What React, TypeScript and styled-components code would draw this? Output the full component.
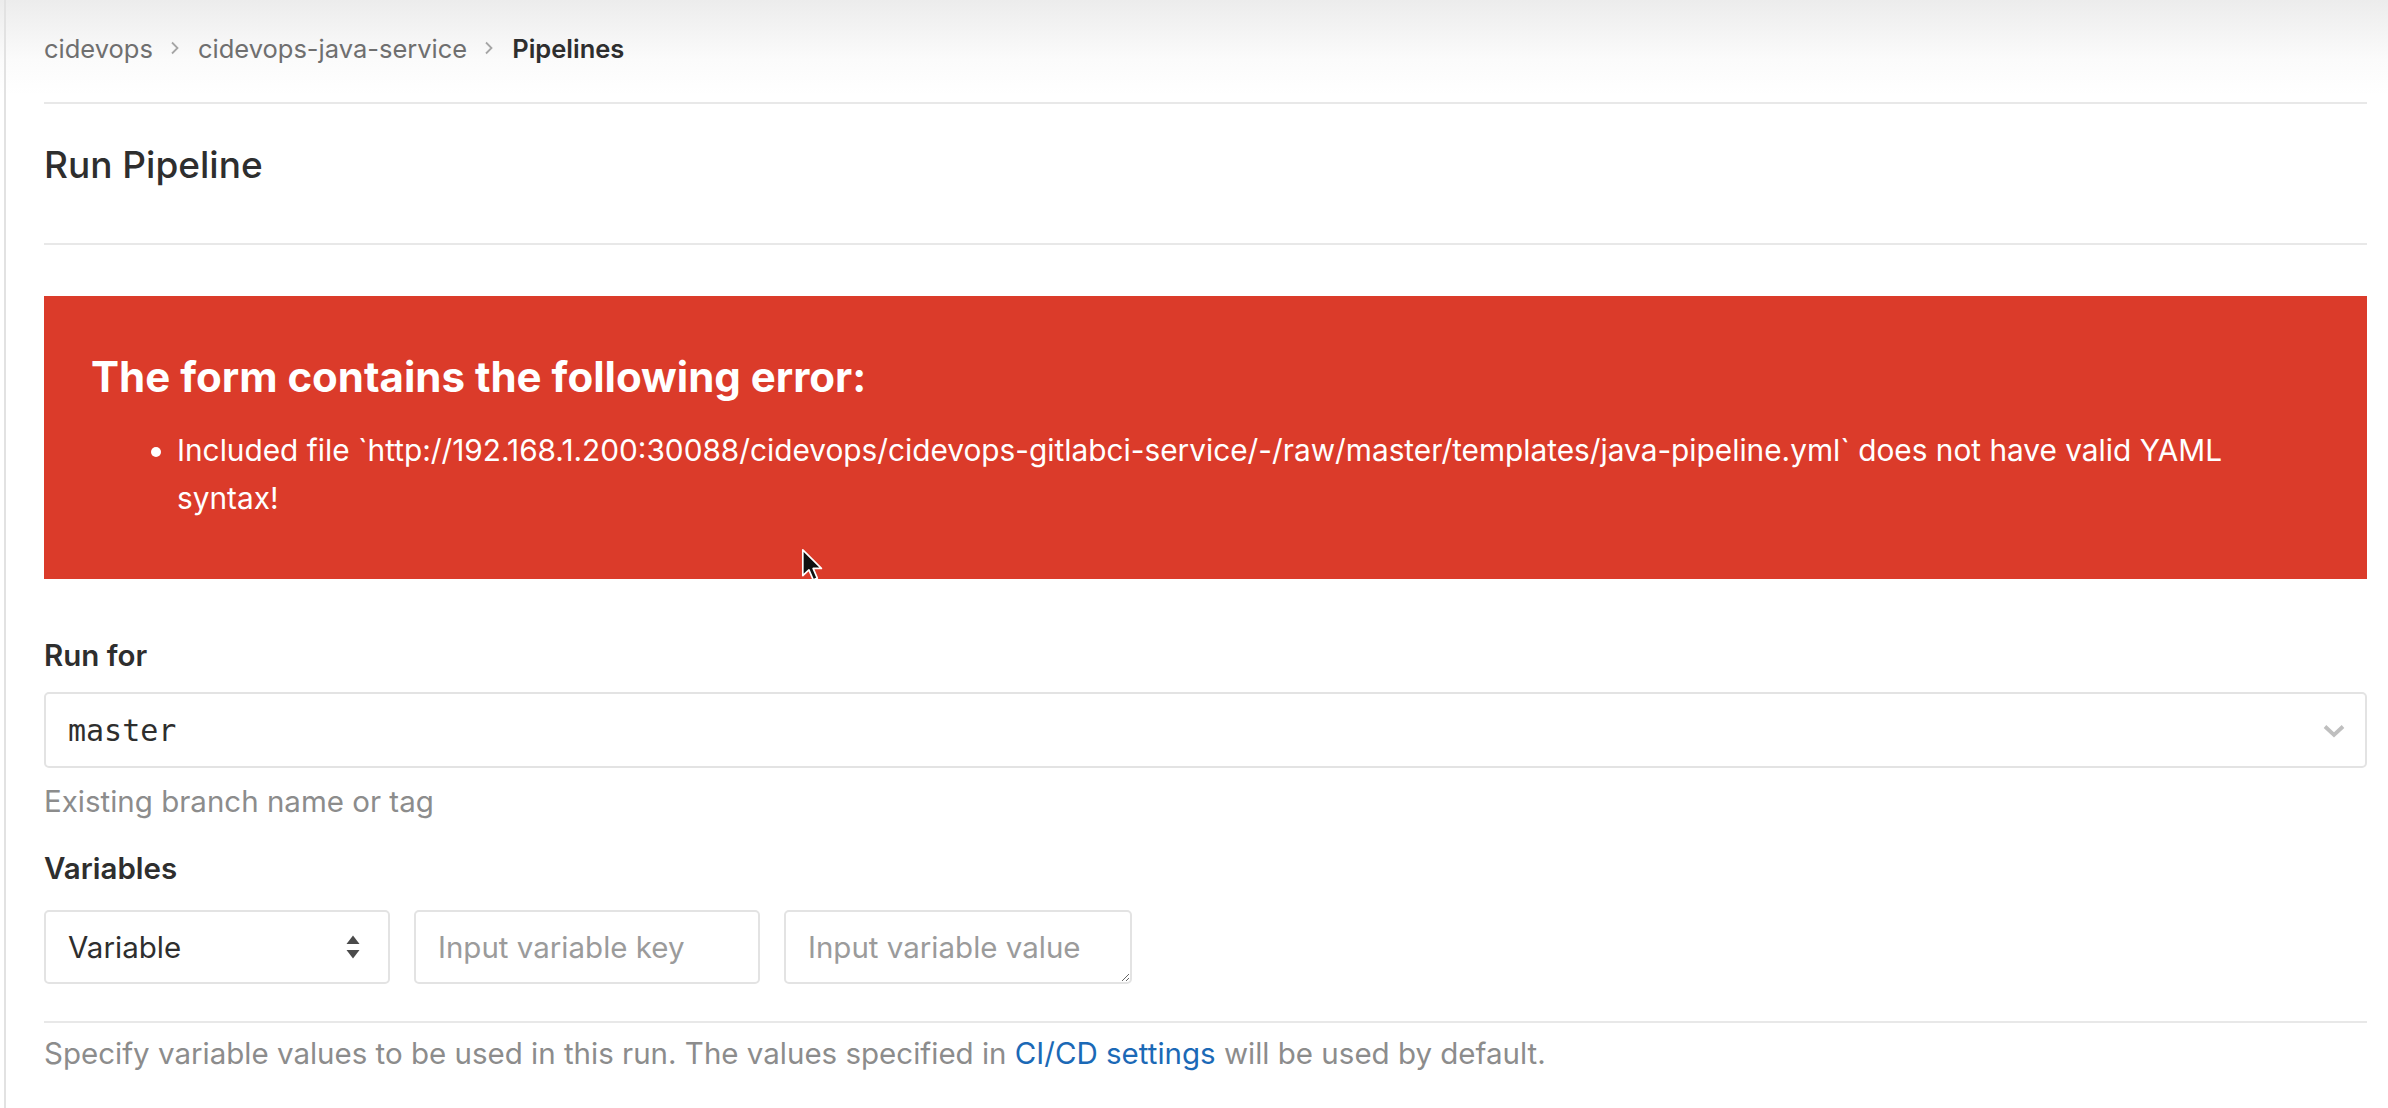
import React from 'react';
import styled, { createGlobalStyle } from 'styled-components';

const GlobalStyle = createGlobalStyle`
  html, body { margin: 0; padding: 0; background: #fff; }
  body {
    font-family: Inter, "Noto Sans", "Liberation Sans", sans-serif;
    color: #2e2e2e;
    -webkit-font-smoothing: antialiased;
  }
  * { box-sizing: border-box; }
`;

const Layout = styled.div`
  position: relative;
  display: flex;
  width: 2388px;
  min-height: 1108px;
  background: linear-gradient(#ececec 0, #fbfbfb 60px, #fff 95px) no-repeat;
`;

const SideEdge = styled.div`
  width: 6px;
  flex-shrink: 0;
  border-right: 2px solid #e2e2e2;
`;

const Main = styled.main`
  flex: 1;
  padding: 0 21px 0 38px;
`;

const Breadcrumbs = styled.nav`
  display: flex;
  align-items: center;
  height: 104px;
  padding-bottom: 6px;
  border-bottom: 2px solid #e8e8e8;
  font-size: 25.5px;
  color: #6f6f6f;
`;

const Crumb = styled.span<{ $current?: boolean }>`
  font-weight: ${p => (p.$current ? 600 : 400)};
  color: ${p => (p.$current ? '#2e2e2e' : '#6f6f6f')};
`;

const CrumbSep = styled.svg`
  width: 10px;
  height: 14px;
  margin: 0 18px 0 17px;
`;

const TitleBar = styled.div`
  padding: 40px 0 57px;
  border-bottom: 2px solid #e8e8e8;
`;

const PageTitle = styled.h3`
  margin: 0;
  font-size: 37px;
  line-height: 42px;
  font-weight: 500;
  color: #2e2e2e;
`;

const ErrorAlert = styled.div`
  margin-top: 51px;
  padding: 57px 120px 57px 47px;
  background: #db3b2a;
  color: #fff;
`;

const ErrorTitle = styled.h4`
  margin: 0 0 25px;
  font-size: 42px;
  line-height: 48px;
  font-weight: 700;
`;

const ErrorList = styled.ul`
  margin: 0;
  padding-left: 86px;
  font-size: 29.8px;
  line-height: 48px;
`;

const FieldLabel = styled.label<{ $gap: number }>`
  display: block;
  margin-top: ${p => p.$gap}px;
  font-size: 29.5px;
  line-height: 40px;
  font-weight: 600;
  color: #2e2e2e;
`;

const BranchSelect = styled.div`
  display: flex;
  align-items: center;
  justify-content: space-between;
  height: 76px;
  margin-top: 17px;
  padding: 0 19px 0 22px;
  border: 2px solid #e3e3e3;
  border-radius: 5px;
  font-family: "DejaVu Sans Mono", "Liberation Mono", monospace;
  font-size: 30px;
  color: #2e2e2e;
`;

const HelpText = styled.p<{ $gap: number }>`
  margin: ${p => p.$gap}px 0 0;
  font-size: 29.5px;
  line-height: 40px;
  color: #8c8c8c;
`;

const Link = styled.a`
  color: #1b69b6;
  text-decoration: none;
`;

const VariableRow = styled.div`
  display: grid;
  grid-template-columns: 346px 346px 348px;
  gap: 24px;
  margin-top: 22px;
`;

const TypeSelect = styled.div`
  display: flex;
  align-items: center;
  justify-content: space-between;
  height: 74px;
  padding: 0 27px 0 22px;
  border: 2px solid #e3e3e3;
  border-radius: 5px;
  font-size: 29.5px;
  color: #2e2e2e;
`;

const KeyInput = styled.input`
  height: 74px;
  padding: 0 22px;
  border: 2px solid #e3e3e3;
  border-radius: 5px;
  font: inherit;
  font-size: 29.5px;
  color: #2e2e2e;
  outline: none;
  &::placeholder { color: #9b9b9b; }
`;

const ValueInput = styled.textarea`
  height: 74px;
  padding: 15px 22px 0;
  border: 2px solid #e3e3e3;
  border-radius: 5px;
  font: inherit;
  font-size: 29.5px;
  line-height: 40px;
  color: #2e2e2e;
  outline: none;
  resize: vertical;
  overflow: hidden;
  &::placeholder { color: #9b9b9b; }
`;

const Divider = styled.hr`
  margin: 37px 0 0;
  border: 0;
  border-top: 2px solid #e8e8e8;
`;

const Pointer = styled.svg`
  position: absolute;
  left: 801px;
  top: 548px;
  width: 24px;
  height: 36px;
  pointer-events: none;
`;

const Chevron = () => (
  <CrumbSep viewBox="0 0 10 14">
    <path d="M2 1.5 L7.5 7 L2 12.5" fill="none" stroke="#a5a5a5" strokeWidth="1.8" />
  </CrumbSep>
);

const App = () => {
  return (
    <>
      <GlobalStyle />
      <Layout>
        <SideEdge />
        <Main>
          <Breadcrumbs>
            <Crumb>cidevops</Crumb>
            <Chevron />
            <Crumb>cidevops-java-service</Crumb>
            <Chevron />
            <Crumb $current>Pipelines</Crumb>
          </Breadcrumbs>

          <TitleBar>
            <PageTitle>Run Pipeline</PageTitle>
          </TitleBar>

          <ErrorAlert>
            <ErrorTitle>The form contains the following error:</ErrorTitle>
            <ErrorList>
              <li>
                Included file `http://192.168.1.200:30088/cidevops/cidevops-gitlabci-service/-/raw/master/templates/java-pipeline.yml` does not have valid YAML syntax!
              </li>
            </ErrorList>
          </ErrorAlert>

          <FieldLabel $gap={56}>Run for</FieldLabel>
          <BranchSelect>
            <span>master</span>
            <svg width="24" height="15" viewBox="0 0 24 15">
              <path d="M3 3.5 L12 12 L21 3.5" fill="none" stroke="#bfbfbf" strokeWidth="3.8" />
            </svg>
          </BranchSelect>
          <HelpText $gap={13}>Existing branch name or tag</HelpText>

          <FieldLabel $gap={27}>Variables</FieldLabel>
          <VariableRow>
            <TypeSelect>
              <span>Variable</span>
              <svg width="16" height="28" viewBox="0 0 16 28">
                <path d="M8 2.5 L14.5 11 L1.5 11 Z" fill="#4a4a4a" />
                <path d="M8 25.5 L14.5 17 L1.5 17 Z" fill="#4a4a4a" />
              </svg>
            </TypeSelect>
            <KeyInput placeholder="Input variable key" />
            <ValueInput placeholder="Input variable value" />
          </VariableRow>

          <Divider />
          <HelpText $gap={10}>
            Specify variable values to be used in this run. The values specified in{' '}
            <Link href="#">CI/CD settings</Link> will be used by default.
          </HelpText>
        </Main>

        <Pointer viewBox="0 0 20 30">
          <path d="M1.5 1.5 L1.5 23 L6.6 18.2 L10.2 26.6 L13.6 25.1 L10.1 17 L17 17 Z" fill="#111" stroke="#fff" strokeWidth="1.4" strokeLinejoin="round" />
        </Pointer>
      </Layout>
    </>
  );
};

export default App;
